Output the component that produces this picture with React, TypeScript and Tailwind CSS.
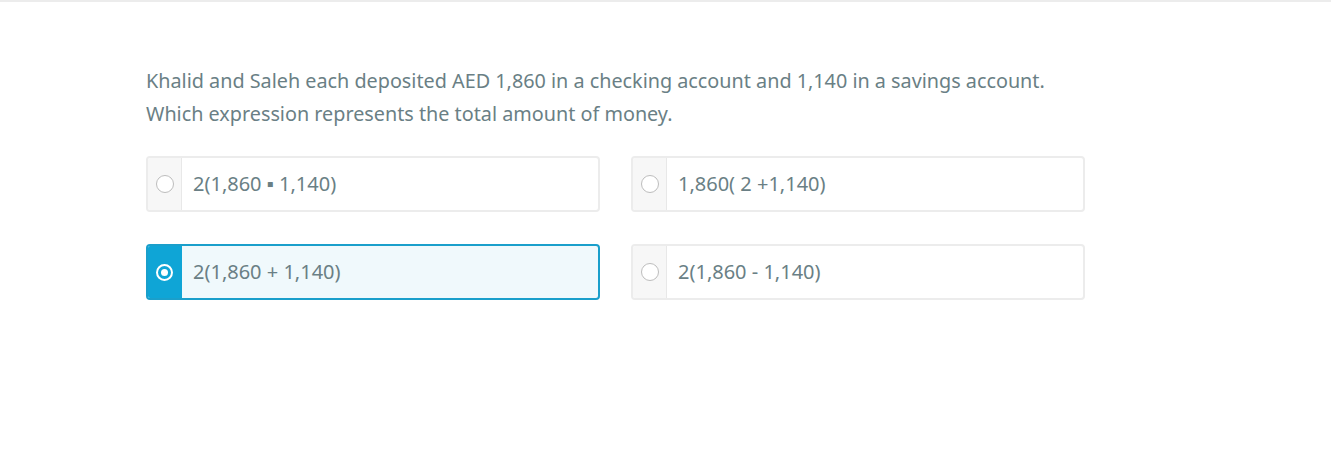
import React from "react";

const options = [
  { label: "2(1,860 ▪ 1,140)", selected: false },
  { label: "1,860( 2 +1,140)", selected: false },
  { label: "2(1,860 + 1,140)", selected: true },
  { label: "2(1,860 - 1,140)", selected: false },
];

function Radio({ selected }: { selected: boolean }) {
  if (selected) {
    return (
      <span className="flex h-[17px] w-[17px] items-center justify-center rounded-full border-2 border-white">
        <span className="h-[7px] w-[7px] rounded-full bg-white" />
      </span>
    );
  }
  return <span className="h-[18px] w-[18px] rounded-full border border-[#bdbdbd] bg-white" />;
}

export default function App() {
  return (
    <div className="min-h-[463px] w-full border-t-2 border-[#ececec] bg-white font-['Noto_Sans',sans-serif] text-[#6a7f85]">
      <div className="pl-[146px] pt-[62px]">
        <p className="text-[19.8px] leading-[33px]">
          Khalid and Saleh each deposited AED 1,860 in a checking account and 1,140 in a savings account.
          <br />
          Which expression represents the total amount of money.
        </p>
        <div className="mt-[26px] grid grid-cols-[454px_454px] gap-x-[31px] gap-y-[32px]">
          {options.map((o) => (
            <div
              key={o.label}
              className={
                "flex h-[56px] overflow-hidden rounded-[4px] border-2 " +
                (o.selected ? "border-[#1a9fcb] bg-[#f0f9fc]" : "border-[#ececec] bg-white")
              }
            >
              <div
                className={
                  "flex w-[34px] items-center justify-center border-r " +
                  (o.selected ? "border-[#0fa5d6] bg-[#0fa5d6]" : "border-[#e8e8e8] bg-[#f7f7f7]")
                }
              >
                <Radio selected={o.selected} />
              </div>
              <div className="flex items-center pl-[11px] text-[20px]">{o.label}</div>
            </div>
          ))}
        </div>
      </div>
    </div>
  );
}
